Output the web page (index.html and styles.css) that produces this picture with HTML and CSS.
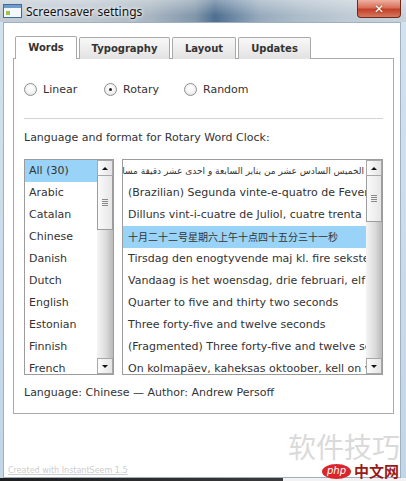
FILE: index.html
```html
<!DOCTYPE html>
<html lang="en">
<head>
  <meta charset="UTF-8" />
  <title>Screensaver settings</title>
  <link rel="stylesheet" href="styles.css">
</head>
<body>
  <div class="window">
    <div class="titlebar">
      <svg class="title-icon" width="19" height="14" viewBox="0 0 19 14">
        <rect x="0.5" y="0.5" width="18" height="13" fill="#f4f8fc" stroke="#3d6d9c"/>
        <rect x="1" y="1" width="17" height="3" fill="#6f9cc8"/>
        <rect x="3" y="7" width="4" height="4" fill="#9cc24a"/>
      </svg>
      <span class="title">Screensaver settings</span>
      <div class="close">&#x2715;</div>
    </div>

    <div class="client">
      <div class="tabs">
        <div class="tab active tab-words">Words</div>
        <div class="tab tab-typo">Typography</div>
        <div class="tab tab-layout">Layout</div>
        <div class="tab tab-updates">Updates</div>
      </div>

      <div class="panel">
        <div class="modes">
          <label class="mode"><span class="radio"></span>Linear</label>
          <label class="mode"><span class="radio on"></span>Rotary</label>
          <label class="mode"><span class="radio"></span>Random</label>
        </div>
        <div class="sep"></div>
        <p class="prompt">Language and format for Rotary Word Clock:</p>

        <div class="lists">
          <div class="listbox langs">
            <ul class="items">
              <li class="sel">All (30)</li>
              <li>Arabic</li>
              <li>Catalan</li>
              <li>Chinese</li>
              <li>Danish</li>
              <li>Dutch</li>
              <li>English</li>
              <li>Estonian</li>
              <li>Finnish</li>
              <li>French</li>
            </ul>
            <div class="scrollbar">
              <div class="sb-btn"><span class="arrow-up"></span></div>
              <div class="thumb thumb-langs"></div>
              <div class="sb-track"></div>
              <div class="sb-btn"><span class="arrow-down"></span></div>
            </div>
          </div>

          <div class="listbox formats">
            <ul class="items">
              <li class="rtl">الخميس السادس عشر من يناير السابعة و احدى عشر دقيقة مساءاً و عشرون ثانية</li>
              <li>(Brazilian) Segunda vinte-e-quatro de Fevereiro</li>
              <li>Dilluns vint-i-cuatre de Juliol, cuatre trenta</li>
              <li class="sel cjk">十月二十二号星期六上午十点四十五分三十一秒</li>
              <li>Tirsdag den enogtyvende maj kl. fire seksten</li>
              <li>Vandaag is het woensdag, drie februari, elf uur</li>
              <li>Quarter to five and thirty two seconds</li>
              <li>Three forty-five and twelve seconds</li>
              <li>(Fragmented) Three forty-five and twelve seconds</li>
              <li>On kolmapäev, kaheksas oktoober, kell on viis</li>
            </ul>
            <div class="scrollbar">
              <div class="sb-btn"><span class="arrow-up"></span></div>
              <div class="thumb thumb-formats"></div>
              <div class="sb-track"></div>
              <div class="sb-btn"><span class="arrow-down"></span></div>
            </div>
          </div>
        </div>

        <p class="info">Language: Chinese — Author: Andrew Persoff</p>
      </div>

      <a class="credit">Created with InstantSeem 1.5</a>
    </div>
    <div class="shadow"></div>

    <div class="watermark">
      <div class="wm-text">软件技巧</div>
      <div class="wm-logo"><span class="wm-php">php</span><span class="wm-cn">中文网</span></div>
    </div>
  </div>
</body>
</html>
```

FILE: styles.css
```css
* {
  margin: 0;
  padding: 0;
  box-sizing: border-box;
}
body {
  font-family: 'DejaVu Sans', Verdana, sans-serif;
  font-size: 11px;
  color: #333;
  background-color: #c6d9ea;
}
.window {
  position: relative;
  width: 406px;
  height: 481px;
  overflow: hidden;
  background: linear-gradient(to bottom, #d3e2ef, #c2d6e8);
}

/* title bar */
.titlebar {
  height: 22px;
  display: flex;
  align-items: center;
  background:
    linear-gradient(to bottom, rgba(255,255,255,0.35), rgba(255,255,255,0) 70%),
    linear-gradient(to right, #c3ccd4 0, #bcc6cf 90px, #a9b6c2 150px, #8297ab 195px, #4f6f90 215px, #6f8ba6 235px, #98abbd 260px, #aebdca 300px, #c0cbd5 350px, #c8d2db 406px);
}
.title-icon {
  margin-left: 3px;
  flex: none;
}
.title {
  margin-left: 4px;
  font-family: 'Noto Sans', sans-serif;
  font-size: 12px;
  color: #111;
  text-shadow: 0 0 5px #fff, 0 0 3px #fff;
}
.close {
  align-self: flex-start;
  margin-left: auto;
  margin-right: 5px;
  width: 44px;
  height: 18px;
  border: 1px solid #6b2a1e;
  border-top: none;
  border-radius: 0 0 4px 4px;
  background: linear-gradient(to bottom, #eeb1a2, #d9705a 45%, #c2402a 55%, #d8785f);
  color: #fff;
  font-size: 12px;
  font-weight: bold;
  display: flex;
  align-items: center;
  justify-content: center;
  text-shadow: 0 0 2px #6b2a1e;
}

/* window body */
.client {
  margin-left: 3px;
  width: 398px;
  height: 456px;
  background-color: #fff;
  border: 1px solid #9fb0c0;
  padding: 13px 0 0 9px;
}
.tabs {
  display: flex;
  align-items: flex-end;
  gap: 2px;
  height: 23px;
  padding-left: 2px;
}
.tab {
  height: 22px;
  border: 1px solid #a9a9a9;
  border-bottom: none;
  border-radius: 2px 2px 0 0;
  background: linear-gradient(to bottom, #f8f8f8, #e2e2e2);
  font-size: 10px;
  font-weight: bold;
  color: #333;
  display: flex;
  align-items: center;
  justify-content: center;
  padding-bottom: 1px;
}
.tab.active {
  position: relative;
  z-index: 1;
  height: 23px;
  background: #fff;
}
.tab-words { width: 62px; }
.tab-typo { width: 91px; }
.tab-layout { width: 64px; }
.tab-updates { width: 73px; }

.panel {
  margin-top: -1px;
  width: 381px;
  height: 356px;
  border: 1px solid #aaa;
  background-color: #fff;
  padding: 0 10px;
}
.modes {
  display: flex;
  align-items: center;
  height: 14px;
  margin-top: 23px;
}
.mode {
  width: 80px;
  display: flex;
  align-items: center;
  gap: 6px;
}
.radio {
  position: relative;
  width: 13px;
  height: 13px;
  border-radius: 50%;
  border: 1px solid #8f9091;
  background: radial-gradient(circle at 50% 40%, #fff 20%, #dedede);
}
.radio.on::after {
  content: "";
  position: absolute;
  left: 4px;
  top: 4px;
  width: 3px;
  height: 3px;
  border-radius: 50%;
  background-color: #222;
}
.sep {
  margin-top: 22px;
  height: 2px;
  border-top: 1px solid #d3d3d3;
  border-bottom: 1px solid #fff;
}
.prompt {
  margin-top: 11px;
  line-height: 14px;
}
.lists {
  display: flex;
  gap: 8px;
  margin-top: 14px;
  height: 216px;
}
.info {
  margin-top: 11px;
  line-height: 14px;
}

/* list boxes */
.listbox {
  display: flex;
  height: 216px;
  border: 1px solid #9c9c9c;
  overflow: hidden;
}
.langs { width: 90px; }
.formats { flex: 1; }
.items {
  flex: 1;
  min-width: 0;
  list-style: none;
  overflow: hidden;
}
.items li {
  height: 22px;
  line-height: 22px;
  padding-left: 4px;
  white-space: nowrap;
  overflow: hidden;
}
.formats .items li { padding-left: 5px; }
.items li.sel { background-color: #99d3f7; }
.items li.rtl {
  direction: rtl;
  font-size: 9px;
  padding: 0 2px 0 0;
}
.items li.cjk {
  font-family: 'Noto Sans CJK SC', sans-serif;
  font-size: 10px;
}

.scrollbar {
  width: 16px;
  flex: none;
  display: flex;
  flex-direction: column;
  background: linear-gradient(to right, #f4f4f4, #dcdcdc 55%, #b9b9b9);
}
.sb-btn {
  height: 16px;
  flex: none;
  border: 1px solid #a8a8a8;
  background: linear-gradient(to right, #fcfcfc, #e4e4e4);
  display: flex;
  align-items: center;
  justify-content: center;
}
.arrow-up {
  border-left: 3px solid transparent;
  border-right: 3px solid transparent;
  border-bottom: 3px solid #111;
}
.arrow-down {
  border-left: 3px solid transparent;
  border-right: 3px solid transparent;
  border-top: 3px solid #111;
}
.thumb {
  position: relative;
  flex: none;
  border: 1px solid #9d9d9d;
  border-top: none;
  background: linear-gradient(to right, #fafafa, #e6e6e6);
}
.thumb::after {
  content: "";
  position: absolute;
  left: 4px;
  right: 4px;
  top: 50%;
  height: 7px;
  margin-top: -4px;
  background: repeating-linear-gradient(to bottom, #8a8a8a 0, #8a8a8a 1px, transparent 1px, transparent 2px);
}
.thumb-langs { height: 54px; }
.thumb-formats { height: 46px; }
.sb-track { flex: 1; }

.credit {
  display: block;
  margin: 51px 0 0 -5px;
  font-size: 8px;
  line-height: 11px;
  color: #cdcdcd;
  text-decoration: underline;
}
.shadow {
  height: 3px;
  background: linear-gradient(to right, #1e1e1e 0, #3a3a3a 283px, #f2f2f2 283px);
}

/* watermark over the window */
.watermark {
  position: absolute;
  left: 288px;
  top: 432px;
}
.wm-text {
  font-family: 'Noto Sans CJK SC', sans-serif;
  font-size: 28px;
  line-height: 28px;
  color: #dadada;
}
.wm-logo {
  display: flex;
  align-items: center;
  margin: 3px 0 0 34px;
}
.wm-php {
  width: 29px;
  height: 15px;
  border-radius: 50%;
  background-color: #d9262c;
  color: #fff;
  font-family: 'DejaVu Sans', sans-serif;
  font-size: 10px;
  font-style: italic;
  line-height: 14px;
  text-align: center;
}
.wm-cn {
  margin-left: 3px;
  font-family: 'Noto Sans CJK SC', sans-serif;
  font-size: 15px;
  font-weight: bold;
  line-height: 16px;
  color: #9a1a1a;
}
```
